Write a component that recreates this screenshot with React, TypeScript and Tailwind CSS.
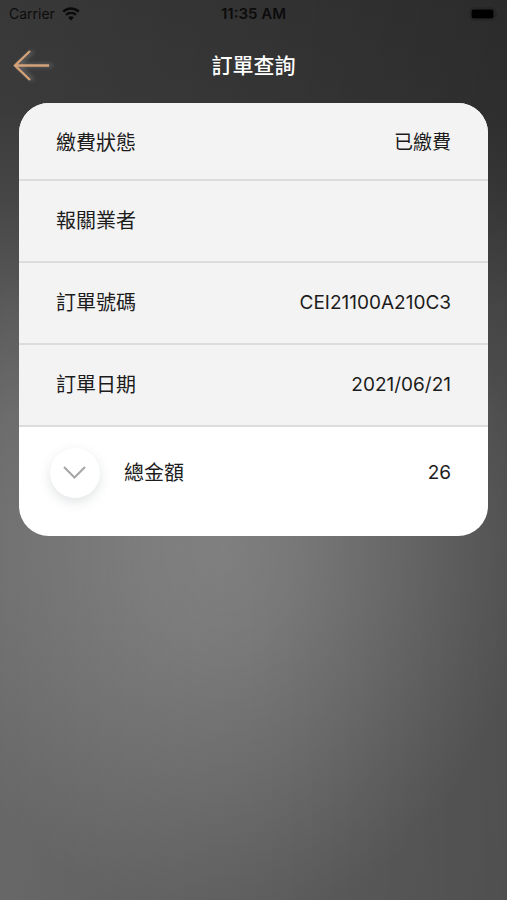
import React, { useState } from 'react';

const WifiIcon: React.FC = () => (
  <svg width="18" height="14" viewBox="0 0 18 14" fill="none" aria-hidden="true">
    <path d="M1.2 4.7a11.2 11.2 0 0 1 15.6 0" stroke="#0a0a0a" strokeWidth="2.5" />
    <path d="M4 7.9a7.2 7.2 0 0 1 10 0" stroke="#0a0a0a" strokeWidth="2.3" />
    <path d="M9 13.6 6.2 10.6a4 4 0 0 1 5.6 0Z" fill="#0a0a0a" />
  </svg>
);

const BatteryIcon: React.FC = () => (
  <svg width="29" height="14" viewBox="0 0 29 14" aria-hidden="true">
    <rect x="1" y="1" width="25" height="12" rx="3" fill="none" stroke="#222" strokeWidth="1" />
    <rect x="2.500" y="2.500" width="22" height="9" rx="2" fill="#000" />
    <path d="M27 5.2c1.3.6 1.3 3 0 3.6Z" fill="#222" />
  </svg>
);

const StatusBar: React.FC = () => (
  <div className="grid h-7 grid-cols-3 items-center px-[9px] text-sm text-[#0c0c0c]">
    <div className="flex items-center gap-[7px]">
      <span>Carrier</span>
      <WifiIcon />
    </div>
    <span className="text-center text-[15px] font-semibold">11:35 AM</span>
    <div className="flex justify-end">
      <BatteryIcon />
    </div>
  </div>
);

const Row: React.FC<{ label: string; value?: string; first?: boolean }> = ({ label, value, first }) => (
  <div
    className={`flex items-center justify-between border-b-2 border-[#dcdcdc] bg-[#f3f3f3] px-[37px] ${
      first ? 'h-[78px] pt-1' : 'h-[82px]'
    }`}
  >
    <dt>{label}</dt>
    <dd className="text-[19px]">{value}</dd>
  </div>
);

const rows = [
  { label: '繳費狀態', value: '已繳費' },
  { label: '報關業者', value: '' },
  { label: '訂單號碼', value: 'CEI21100A210C3' },
  { label: '訂單日期', value: '2021/06/21' },
];

export default function App() {
  const [expanded, setExpanded] = useState(false);

  return (
    <div className="min-h-screen bg-[radial-gradient(ellipse_60%_42%_at_44%_61%,rgba(255,255,255,0.2),rgba(255,255,255,0.17)_25%,rgba(255,255,255,0.09)_60%,rgba(255,255,255,0.03)_85%,transparent),linear-gradient(to_right,transparent,rgba(0,0,0,0.1)_50%,rgba(0,0,0,0.23)),linear-gradient(#383838,#3b3b3b_12%,#464646_22%,#595959_34%,#656565_46%,#696969_60%,#676767)] font-['Inter','Noto_Sans_CJK_TC',sans-serif]">
      <StatusBar />

      <header className="grid h-[75px] grid-cols-[60px_1fr_60px] items-center">
        <button type="button" aria-label="返回" className="pl-[11px]">
          <svg
            width="42"
            height="36"
            viewBox="0 0 42 36"
            fill="none"
            stroke="#d4a278"
            strokeWidth="2.4"
            className="overflow-visible drop-shadow-[3px_0_2px_rgba(255,255,255,0.3)]"
            aria-hidden="true"
          >
            <path d="M4 17.500h34M19 3 4 17.500l15 14.500" />
          </svg>
        </button>
        <h1 className="text-center text-[21px] font-medium text-white">訂單查詢</h1>
      </header>

      <main className="mx-[19px] overflow-hidden rounded-[30px] bg-white text-xl text-[#1c1c1c]">
        <dl>
          {rows.map((row, i) => (
            <Row key={row.label} label={row.label} value={row.value} first={i === 0} />
          ))}
          <div className="flex items-center pt-[21px] pr-[37px] pb-[38px] pl-[31px]">
            <dt className="flex items-center gap-6">
              <button
                type="button"
                aria-label="顯示明細"
                aria-expanded={expanded}
                onClick={() => setExpanded(!expanded)}
                className="flex size-[50px] items-center justify-center rounded-full bg-white shadow-[0_4px_12px_rgba(60,80,90,0.16)]"
              >
                <svg width="24" height="14" viewBox="0 0 24 14" fill="none" stroke="#a6a6a6" strokeWidth="2" aria-hidden="true">
                  <path d="m1 1 10.500 10.500L22 1" />
                </svg>
              </button>
              <span>總金額</span>
            </dt>
            <dd className="ml-auto text-[19px]">26</dd>
          </div>
        </dl>
      </main>
    </div>
  );
}
